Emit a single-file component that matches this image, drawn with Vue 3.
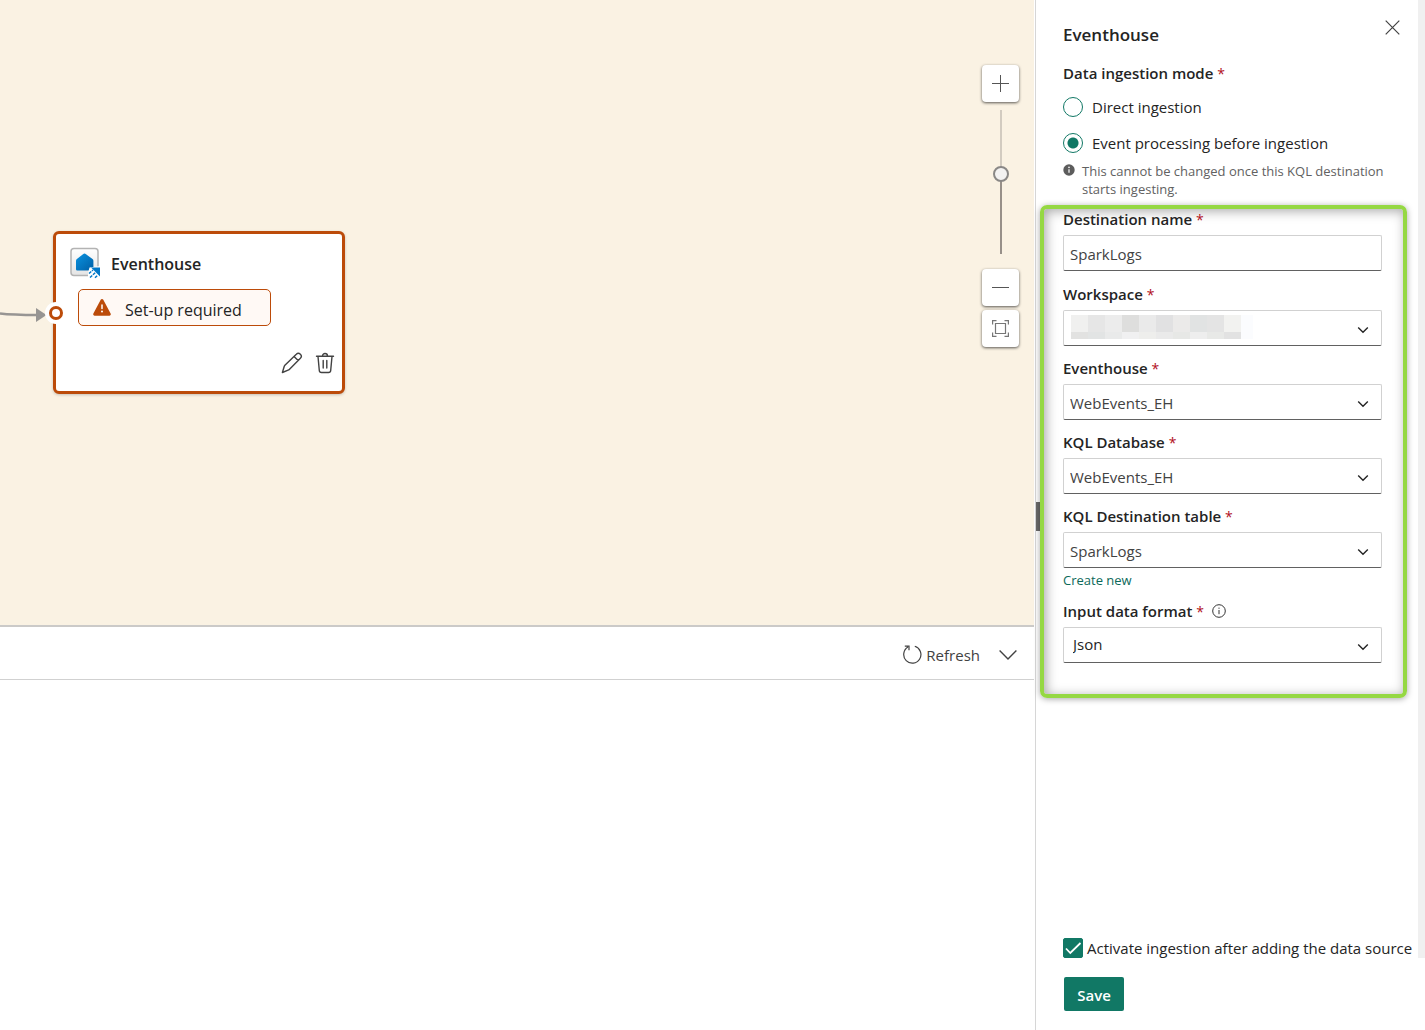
<script setup>
import { ref } from 'vue'

const mode = ref('processing')
const destination = ref('SparkLogs')
const activate = ref(true)
const zoom = ref(56)

const selects = ref([
  { id: 'workspace', label: 'Workspace', value: '', masked: true },
  { id: 'eventhouse', label: 'Eventhouse', value: 'WebEvents_EH' },
  { id: 'database', label: 'KQL Database', value: 'WebEvents_EH' },
  { id: 'table', label: 'KQL Destination table', value: 'SparkLogs', link: 'Create new' },
  { id: 'format', label: 'Input data format', value: 'Json', info: true },
])

const maskColors = [
  '#f0f0ef', '#e6e6e6', '#ececec', '#dededd', '#eaeaea', '#e1e1e2', '#ebeae9', '#e1e3e3', '#e4e4e4', '#f2f2f0', '#fbfcfe',
  '#e2e2e1', '#e2e4e4', '#e9eaea', '#f0f0f1', '#eeeeec', '#eaeaea', '#e7e8e6', '#eeeeee', '#e8e9e7', '#e2e2e2', '#fbfcfe',
]
</script>

<template>
  <div class="page">
    <main class="workarea">
      <section class="canvas">
        <svg class="edge" width="48" height="20" viewBox="0 0 48 20" aria-hidden="true">
          <path d="M0 8.500C12 10 24 10 38 10" fill="none" stroke="#979593" stroke-width="2.400" />
          <path d="M36 3l10.500 7L36 17z" fill="#979593" />
        </svg>

        <article class="node">
          <span class="port"></span>
          <header class="node-head">
            <svg width="32" height="32" viewBox="0 0 32 32" aria-hidden="true">
              <defs>
                <linearGradient id="tile" x1="0" y1="0" x2="0" y2="1">
                  <stop offset="0" stop-color="#fff" />
                  <stop offset="1" stop-color="#e4e4e4" />
                </linearGradient>
                <linearGradient id="house" x1="0" y1="0" x2="1" y2="1">
                  <stop offset="0" stop-color="#0a93e0" />
                  <stop offset="1" stop-color="#005fa6" />
                </linearGradient>
              </defs>
              <rect x="2" y="1.500" width="27" height="27" rx="3" fill="url(#tile)" stroke="#b3b3b3" stroke-width="1.500" />
              <path d="M14 7.200q1.500-1.200 3 0l6.500 4.800q.9.700.9 1.800v8.500q0 1.200-1.200 1.200H8.200Q7 23.500 7 22.300v-8.500q0-1.100.9-1.800z" fill="url(#house)" />
              <path d="M20.500 20.500l11-1.500v13H19v-6z" fill="#fff" />
              <path d="M22 20.500h9v9z" fill="#0078c8" />
              <path d="M20 26.500l4-3.500M21 30.500l5.500-5M26 30.800l2.800-2.800" stroke="#0078c8" stroke-width="1.500" stroke-dasharray="3 1" />
            </svg>
            <h2>Eventhouse</h2>
          </header>
          <div class="status">
            <svg width="18" height="17" viewBox="0 0 18 17" aria-hidden="true">
              <path d="M7.700.8a1.500 1.500 0 0 1 2.600 0l7.300 13.700a1.500 1.500 0 0 1-1.300 2.200H1.700a1.500 1.500 0 0 1-1.300-2.200z" fill="#bc4b09" />
              <path d="M9 6v3.600" stroke="#fff" stroke-width="1.500" stroke-linecap="round" />
              <circle cx="9" cy="12.500" r="1" fill="#fff" />
            </svg>
            <span>Set-up required</span>
          </div>
          <div class="node-actions">
            <button type="button" aria-label="Edit">
              <svg width="22" height="22" viewBox="0 0 22 22" fill="none" stroke="#424242" stroke-width="1.400" stroke-linejoin="round" aria-hidden="true">
                <path d="M15.300 2.200a2.600 2.600 0 0 1 4.100 4L8.300 17.500q-.5.500-1.200.7L1.400 20.500l1.800-6q.2-.7.700-1.200zM13 4.500l4.200 4.100" />
              </svg>
            </button>
            <button type="button" aria-label="Delete">
              <svg width="20" height="22" viewBox="0 0 20 22" fill="none" stroke="#424242" stroke-width="1.400" stroke-linecap="round" aria-hidden="true">
                <path d="M1.500 4.200h17M7.500 4a2.500 2.500 0 0 1 5 0M3 4.500l1.300 14a2.200 2.200 0 0 0 2.200 2h7a2.200 2.200 0 0 0 2.200-2l1.300-14M8.200 8.500v7.500M11.800 8.500v7.500" />
              </svg>
            </button>
          </div>
        </article>

        <div class="zoom-tools">
          <button type="button" class="tool" aria-label="Zoom in">
            <svg width="17" height="17" viewBox="0 0 17 17" stroke="#555" stroke-width="1" aria-hidden="true"><path d="M8.500 0v17M0 8.500h17" /></svg>
          </button>
          <input v-model="zoom" class="zoom-slider" type="range" min="0" max="100" aria-label="Zoom level" />
          <button type="button" class="tool" aria-label="Zoom out">
            <svg width="17" height="17" viewBox="0 0 17 17" stroke="#555" stroke-width="1" aria-hidden="true"><path d="M0 8.500h17" /></svg>
          </button>
          <button type="button" class="tool" aria-label="Fit to screen">
            <svg width="17" height="17" viewBox="0 0 17 17" fill="none" stroke="#767676" stroke-width="1.200" aria-hidden="true">
              <path d="M.6 4.500V.6h3.900M12.500.6h3.900v3.900M16.400 12.500v3.900h-3.900M4.500 16.400H.6v-3.900M3.500 3.500h10v10h-10z" />
            </svg>
          </button>
        </div>
      </section>

      <section class="preview">
        <div class="preview-bar">
          <button type="button" class="refresh">
            <svg width="20" height="20" viewBox="0 0 20 20" fill="none" stroke="#424242" stroke-width="1.200" aria-hidden="true">
              <path d="M12.800 1.300A8.600 8.600 0 1 1 6 2.100M2.800 1.100h4.200v4.200" />
            </svg>
            <span>Refresh</span>
          </button>
          <button type="button" aria-label="Collapse">
            <svg width="18" height="10" viewBox="0 0 18 10" fill="none" stroke="#424242" stroke-width="1.400" aria-hidden="true"><path d="M.6.6L9 9 17.400.6" /></svg>
          </button>
        </div>
      </section>
    </main>

    <aside class="panel">
      <span class="grip"></span>
      <form class="form" @submit.prevent>
        <header class="panel-head">
          <h1>Eventhouse</h1>
          <button type="button" class="close" aria-label="Close">
            <svg width="15" height="15" viewBox="0 0 15 15" stroke="#424242" stroke-width="1.200" aria-hidden="true"><path d="M.7.7l13.600 13.600M14.300.7L.7 14.300" /></svg>
          </button>
        </header>

        <fieldset class="mode">
          <legend class="caption">Data ingestion mode <span class="req">*</span></legend>
          <label class="choice"><input v-model="mode" type="radio" name="mode" value="direct" />Direct ingestion</label>
          <label class="choice"><input v-model="mode" type="radio" name="mode" value="processing" />Event processing before ingestion</label>
          <p class="hint">
            <svg width="12" height="12" viewBox="0 0 12 12" aria-hidden="true">
              <circle cx="6" cy="6" r="5.700" fill="#5c5c5c" />
              <path d="M6 5.300v3.500" stroke="#fff" stroke-width="1.200" />
              <circle cx="6" cy="3.400" r=".8" fill="#fff" />
            </svg>
            <span>This cannot be changed once this KQL destination starts ingesting.</span>
          </p>
        </fieldset>

        <section class="details">
          <div class="field">
            <label class="caption" for="destination">Destination name <span class="req">*</span></label>
            <input id="destination" v-model="destination" class="control" type="text" />
          </div>
          <div class="source">
            <div v-for="item in selects" :key="item.id" class="field">
              <div class="caption">
                <label :for="item.id">{{ item.label }} <span class="req">*</span></label>
                <svg v-if="item.info" width="14" height="14" viewBox="0 0 14 14" fill="none" stroke="#333" aria-hidden="true">
                  <circle cx="7" cy="7" r="6.300" />
                  <path d="M7 6v4.200M7 3.600v1.200" />
                </svg>
              </div>
              <div class="picker">
                <select :id="item.id" v-model="item.value" class="control" :class="{ dark: item.info }">
                  <option :value="item.value">{{ item.value }}</option>
                </select>
                <div v-if="item.masked" class="mask">
                  <i v-for="(color, n) in maskColors" :key="n" :style="{ background: color }"></i>
                </div>
                <svg class="chevron" width="12" height="8" viewBox="0 0 12 8" fill="none" stroke="#242424" stroke-width="1.400" aria-hidden="true"><path d="M1.200 1.500L6 6.300l4.800-4.800" /></svg>
              </div>
              <a v-if="item.link" class="create" href="#">{{ item.link }}</a>
            </div>
          </div>
        </section>

        <footer class="panel-foot">
          <label class="activate"><input v-model="activate" type="checkbox" />Activate ingestion after adding the data source</label>
          <button type="submit" class="save">Save</button>
        </footer>
      </form>
      <div class="gutter"></div>
    </aside>
  </div>
</template>

<style>
body {
  margin: 0;
}
</style>

<style scoped>
.page {
  display: flex;
  min-height: 100vh;
  background: #fff;
  color: #242424;
  font-family: "Open Sans", "Noto Sans", sans-serif;
  font-size: 15px;
  line-height: 20px;
}

.page * {
  box-sizing: border-box;
}

button {
  padding: 0;
  border: 0;
  background: none;
  color: inherit;
  font: inherit;
  cursor: pointer;
}

svg {
  display: block;
  flex: none;
}

h1,
h2,
p {
  margin: 0;
}

.workarea {
  display: flex;
  flex: 1;
  flex-direction: column;
  min-width: 0;
  margin-right: 1px;
}

.canvas {
  position: relative;
  flex: 1;
  min-height: 400px;
  overflow: hidden;
  border-bottom: 2px solid #cbcac8;
  background: #faf2e3;
}

.edge {
  position: absolute;
  top: 305px;
  left: 0;
}

.node {
  position: absolute;
  top: 231px;
  left: 53px;
  width: 292px;
  height: 163px;
  padding: 13px 7px 16px 13px;
  border: 3px solid #bc4b09;
  border-radius: 6px;
  background: #fff;
  box-shadow: 0 1px 3px rgba(0, 0, 0, 0.2);
}

.port {
  position: absolute;
  top: 72px;
  left: -7px;
  width: 14px;
  height: 14px;
  border: 3px solid #bc4b09;
  border-radius: 50%;
  background: #fff;
  box-shadow: 0 0 0 4px #fff;
}

.node-head {
  display: flex;
  align-items: center;
  gap: 10px;
}

.node-head h2 {
  padding-top: 2px;
  font-size: 16px;
  font-weight: 600;
}

.status {
  display: flex;
  align-items: center;
  gap: 14px;
  width: 193px;
  height: 37px;
  margin: 10px 0 0 9px;
  padding-left: 14px;
  border: 1px solid #bc4b09;
  border-radius: 5px;
  background: #fff9f5;
  font-size: 16px;
}

.status span {
  padding-top: 4px;
}

.node-actions {
  display: flex;
  justify-content: flex-end;
  gap: 12px;
  margin-top: 26px;
}

.zoom-tools {
  position: absolute;
  top: 65px;
  right: 15px;
  display: flex;
  flex-direction: column;
  align-items: center;
}

.tool {
  display: grid;
  place-items: center;
  width: 37px;
  height: 37px;
  border-radius: 4px;
  background: #fff;
  box-shadow: 0 1px 3px rgba(0, 0, 0, 0.65);
}

.tool + .tool {
  margin-top: 4px;
}

.zoom-slider {
  width: 16px;
  height: 144px;
  margin: 8px 0 15px;
  appearance: none;
  writing-mode: vertical-lr;
  direction: rtl;
  background: linear-gradient(#d2cbc0 44%, #979089 44%) center / 2px 100% no-repeat;
}

.zoom-slider::-webkit-slider-thumb {
  width: 16px;
  height: 16px;
  appearance: none;
  border: 2px solid #8a8886;
  border-radius: 50%;
  background: #f3f2f1;
}

.preview {
  height: 403px;
}

.preview-bar {
  display: flex;
  align-items: center;
  justify-content: flex-end;
  gap: 19px;
  height: 53px;
  padding: 3px 17px 0 0;
  border-bottom: 1px solid #d1d1d1;
  color: #424242;
}

.refresh {
  display: flex;
  align-items: center;
  gap: 4px;
}

.panel {
  position: relative;
  display: flex;
  flex: none;
  width: 390px;
  border-left: 1px solid #d6d6d6;
}

.grip {
  position: absolute;
  top: 50%;
  left: 0;
  width: 4px;
  height: 29px;
  margin-top: -13px;
  background: #6b6b6b;
}

.form {
  display: flex;
  flex: 1;
  flex-direction: column;
  min-width: 0;
}

.gutter {
  width: 7px;
  margin-bottom: 72px;
  background: #f0f0f0;
}

.panel-head {
  display: flex;
  justify-content: space-between;
  padding: 20px 18px 0 27px;
}

.panel-head h1 {
  padding-top: 4px;
  font-size: 17px;
  font-weight: 600;
  line-height: 22px;
}

.close {
  align-self: flex-start;
}

.mode {
  margin: 17px 11px 0 27px;
  padding: 0;
  border: 0;
}

.caption {
  display: flex;
  align-items: center;
  gap: 8px;
  padding: 0;
  font-weight: 600;
}

legend.caption,
label.caption {
  display: block;
}

.req {
  color: #b10e1c;
  font-size: 14px;
  font-weight: 400;
  line-height: 1;
}

.choice {
  display: flex;
  align-items: center;
  gap: 9px;
  margin-top: 16px;
}

.caption + .choice {
  margin-top: 14px;
}

.choice input {
  width: 20px;
  height: 20px;
  margin: 0;
  appearance: none;
  border: 1px solid #117865;
  border-radius: 50%;
}

.choice input:checked {
  background: radial-gradient(circle, #117865 5px, #fff 6px);
}

.hint {
  display: flex;
  gap: 7px;
  width: 324px;
  margin-top: 9px;
  color: #616161;
  font-size: 13px;
  line-height: 18px;
}

.hint svg {
  margin-top: 2px;
}

.details {
  position: relative;
  display: flex;
  flex-direction: column;
  gap: 13px;
  margin: 7px 11px 0 4px;
  padding: 0 21px 31px 19px;
  border: 4px solid #95d843;
  border-radius: 7px;
  box-shadow: 0 1px 6px rgba(0, 0, 0, 0.35), inset 2px 2px 12px rgba(0, 0, 0, 0.35);
}

.source {
  display: flex;
  flex-direction: column;
  gap: 12px;
}

.control {
  display: block;
  width: 100%;
  height: 36px;
  margin: 0;
  padding: 2px 6px 0;
  appearance: none;
  border: 1px solid #d1d1d1;
  border-bottom-color: #616161;
  border-radius: 2px;
  background: #fff;
  color: #424242;
  font: inherit;
}

.field > .control,
.picker {
  margin-top: 6px;
}

.dark {
  padding: 0 9px 2px;
  color: #242424;
}

.picker {
  position: relative;
}

.chevron {
  position: absolute;
  top: 16px;
  right: 13px;
  pointer-events: none;
}

.mask {
  position: absolute;
  top: 5px;
  left: 8px;
  display: grid;
  grid-template-rows: 17px 7px;
  grid-template-columns: repeat(10, 17px) 12px;
}

.create {
  display: block;
  margin-top: 3px;
  color: #0c695a;
  font-size: 13px;
  line-height: 18px;
  text-decoration: none;
}

.panel-foot {
  display: flex;
  flex-direction: column;
  align-items: flex-start;
  gap: 19px;
  margin-top: auto;
  padding: 20px 0 19px 27px;
}

.activate {
  display: flex;
  align-items: center;
  gap: 4px;
  white-space: nowrap;
}

.activate input {
  width: 20px;
  height: 20px;
  margin: 0;
  appearance: none;
  border: 1px solid #117865;
  border-radius: 2px;
}

.activate input:checked {
  background: #117865 url("data:image/svg+xml,%3Csvg xmlns='http://www.w3.org/2000/svg' viewBox='0 0 18 18'%3E%3Cpath d='M2 9.500l4.300 4.500L16.500 4' fill='none' stroke='white' stroke-width='1.800'/%3E%3C/svg%3E") center / 18px no-repeat;
}

.save {
  width: 60px;
  height: 34px;
  margin-left: 1px;
  padding-top: 2px;
  border-radius: 2px;
  background: #117865;
  color: #fff;
  font-weight: 600;
}
</style>
